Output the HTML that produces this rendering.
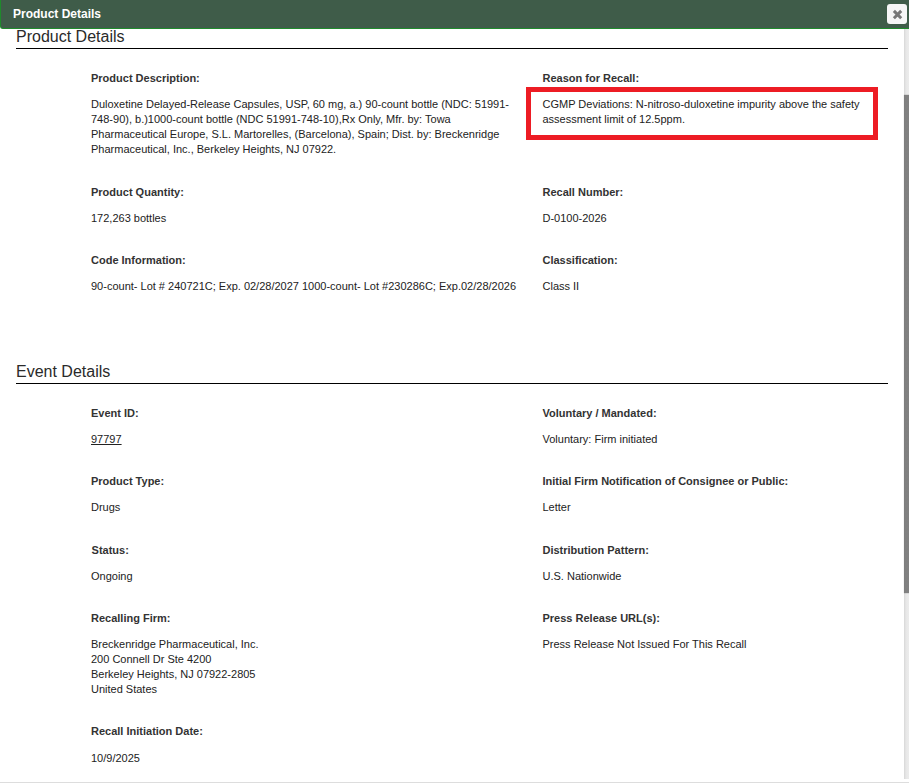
<!DOCTYPE html>
<html><head><meta charset="utf-8"><title>Product Details</title>
<style>
html,body{margin:0;padding:0;background:#fff;}
body{width:909px;height:783px;position:relative;overflow:hidden;font-family:"Liberation Sans",Arial,sans-serif;font-size:11px;color:#222;}
#hdr{position:absolute;left:0;top:0;width:908px;height:28px;background:#3f5c49;border-left:1px solid #1f8a2c;border-bottom:1px solid #1f8a2c;border-bottom-left-radius:3px;box-sizing:content-box;}
#hdr .t{position:absolute;left:12px;top:7px;font-weight:bold;font-size:12px;color:#fff;line-height:14px;}
#close{position:absolute;left:887px;top:4px;width:20px;height:20px;background:#f6f6f6;border-radius:3px;}
#close svg{position:absolute;left:0;top:0;}
h2{position:absolute;margin:0;left:16px;font-weight:normal;font-size:16px;line-height:20px;color:#2a2a2a;width:872px;border-bottom:1px solid #000;height:21px;}
.l{position:absolute;font-weight:bold;font-size:11px;line-height:15px;white-space:nowrap;color:#333;}
.v{position:absolute;font-size:11px;line-height:15px;white-space:nowrap;color:#222;}
.c1{left:91px}.c2{left:542.5px}
#red{position:absolute;left:526px;top:87px;width:342px;height:43px;border:5px solid #ed1c24;}
#track{position:absolute;left:904px;top:29px;width:5px;height:750px;background:linear-gradient(to right,#d6d6d6 0,#e0e0e0 1px,#e6e6e6 2px,#e9e9e9 3px,#ebebeb 5px);}
#thumb{position:absolute;left:904px;top:95px;width:5px;height:498px;background:linear-gradient(to right,#7c7c7c 0,#808080 1px,#818181 5px);box-shadow:-1px 0 0 rgba(0,0,0,0.04),0 -1px 0 rgba(0,0,0,0.08),0 1px 0 rgba(0,0,0,0.08);}
#bot{position:absolute;left:0;top:782px;width:909px;height:1px;background:#ddd;}
</style></head><body>
<div id="hdr"><div class="t">Product Details</div></div>
<div id="close"><svg width="20" height="20" viewBox="0 0 20 20"><path d="M6.9 6.9 L14.2 14.2 M14.2 6.9 L6.9 14.2" stroke="#777" stroke-width="3" fill="none"/></svg></div>
<h2 style="top:27px">Product Details</h2>
<div class="l c1" style="top:71px">Product Description:</div>
<div class="v c1" style="top:97px">Duloxetine Delayed-Release Capsules, USP, 60 mg, a.) 90-count bottle (NDC: 51991-<br>748-90), b.)1000-count bottle (NDC 51991-748-10),Rx Only, Mfr. by: Towa<br>Pharmaceutical Europe, S.L. Martorelles, (Barcelona), Spain; Dist. by: Breckenridge<br>Pharmaceutical, Inc., Berkeley Heights, NJ 07922.</div>
<div class="l c2" style="top:71px">Reason for Recall:</div>
<div id="red"></div>
<div class="v c2" style="top:97px">CGMP Deviations: N-nitroso-duloxetine impurity above the safety<br>assessment limit of 12.5ppm.</div>
<div class="l c1" style="top:185px">Product Quantity:</div>
<div class="v c1" style="top:211px">172,263 bottles</div>
<div class="l c2" style="top:185px">Recall Number:</div>
<div class="v c2" style="top:211px">D-0100-2026</div>
<div class="l c1" style="top:253px">Code Information:</div>
<div class="v c1" style="top:279px">90-count- Lot # 240721C; Exp. 02/28/2027 1000-count- Lot #230286C; Exp.02/28/2026</div>
<div class="l c2" style="top:253px">Classification:</div>
<div class="v c2" style="top:279px">Class II</div>
<h2 style="top:362px">Event Details</h2>
<div class="l c1" style="top:406px">Event ID:</div>
<div class="v c1" style="top:432px;text-decoration:underline">97797</div>
<div class="l c2" style="top:406px">Voluntary / Mandated:</div>
<div class="v c2" style="top:432px">Voluntary: Firm initiated</div>
<div class="l c1" style="top:474px">Product Type:</div>
<div class="v c1" style="top:500px">Drugs</div>
<div class="l c2" style="top:474px">Initial Firm Notification of Consignee or Public:</div>
<div class="v c2" style="top:500px">Letter</div>
<div class="l" style="left:91.6px;top:543px">Status:</div>
<div class="v c1" style="top:569px">Ongoing</div>
<div class="l c2" style="top:543px">Distribution Pattern:</div>
<div class="v c2" style="top:569px">U.S. Nationwide</div>
<div class="l c1" style="top:611px">Recalling Firm:</div>
<div class="v c1" style="top:637px">Breckenridge Pharmaceutical, Inc.<br>200 Connell Dr Ste 4200<br>Berkeley Heights, NJ 07922-2805<br>United States</div>
<div class="l c2" style="top:611px">Press Release URL(s):</div>
<div class="v c2" style="top:637px">Press Release Not Issued For This Recall</div>
<div class="l c1" style="top:724px">Recall Initiation Date:</div>
<div class="v c1" style="top:751px">10/9/2025</div>
<div id="track"></div><div id="thumb"></div><div id="bot"></div>
</body></html>
